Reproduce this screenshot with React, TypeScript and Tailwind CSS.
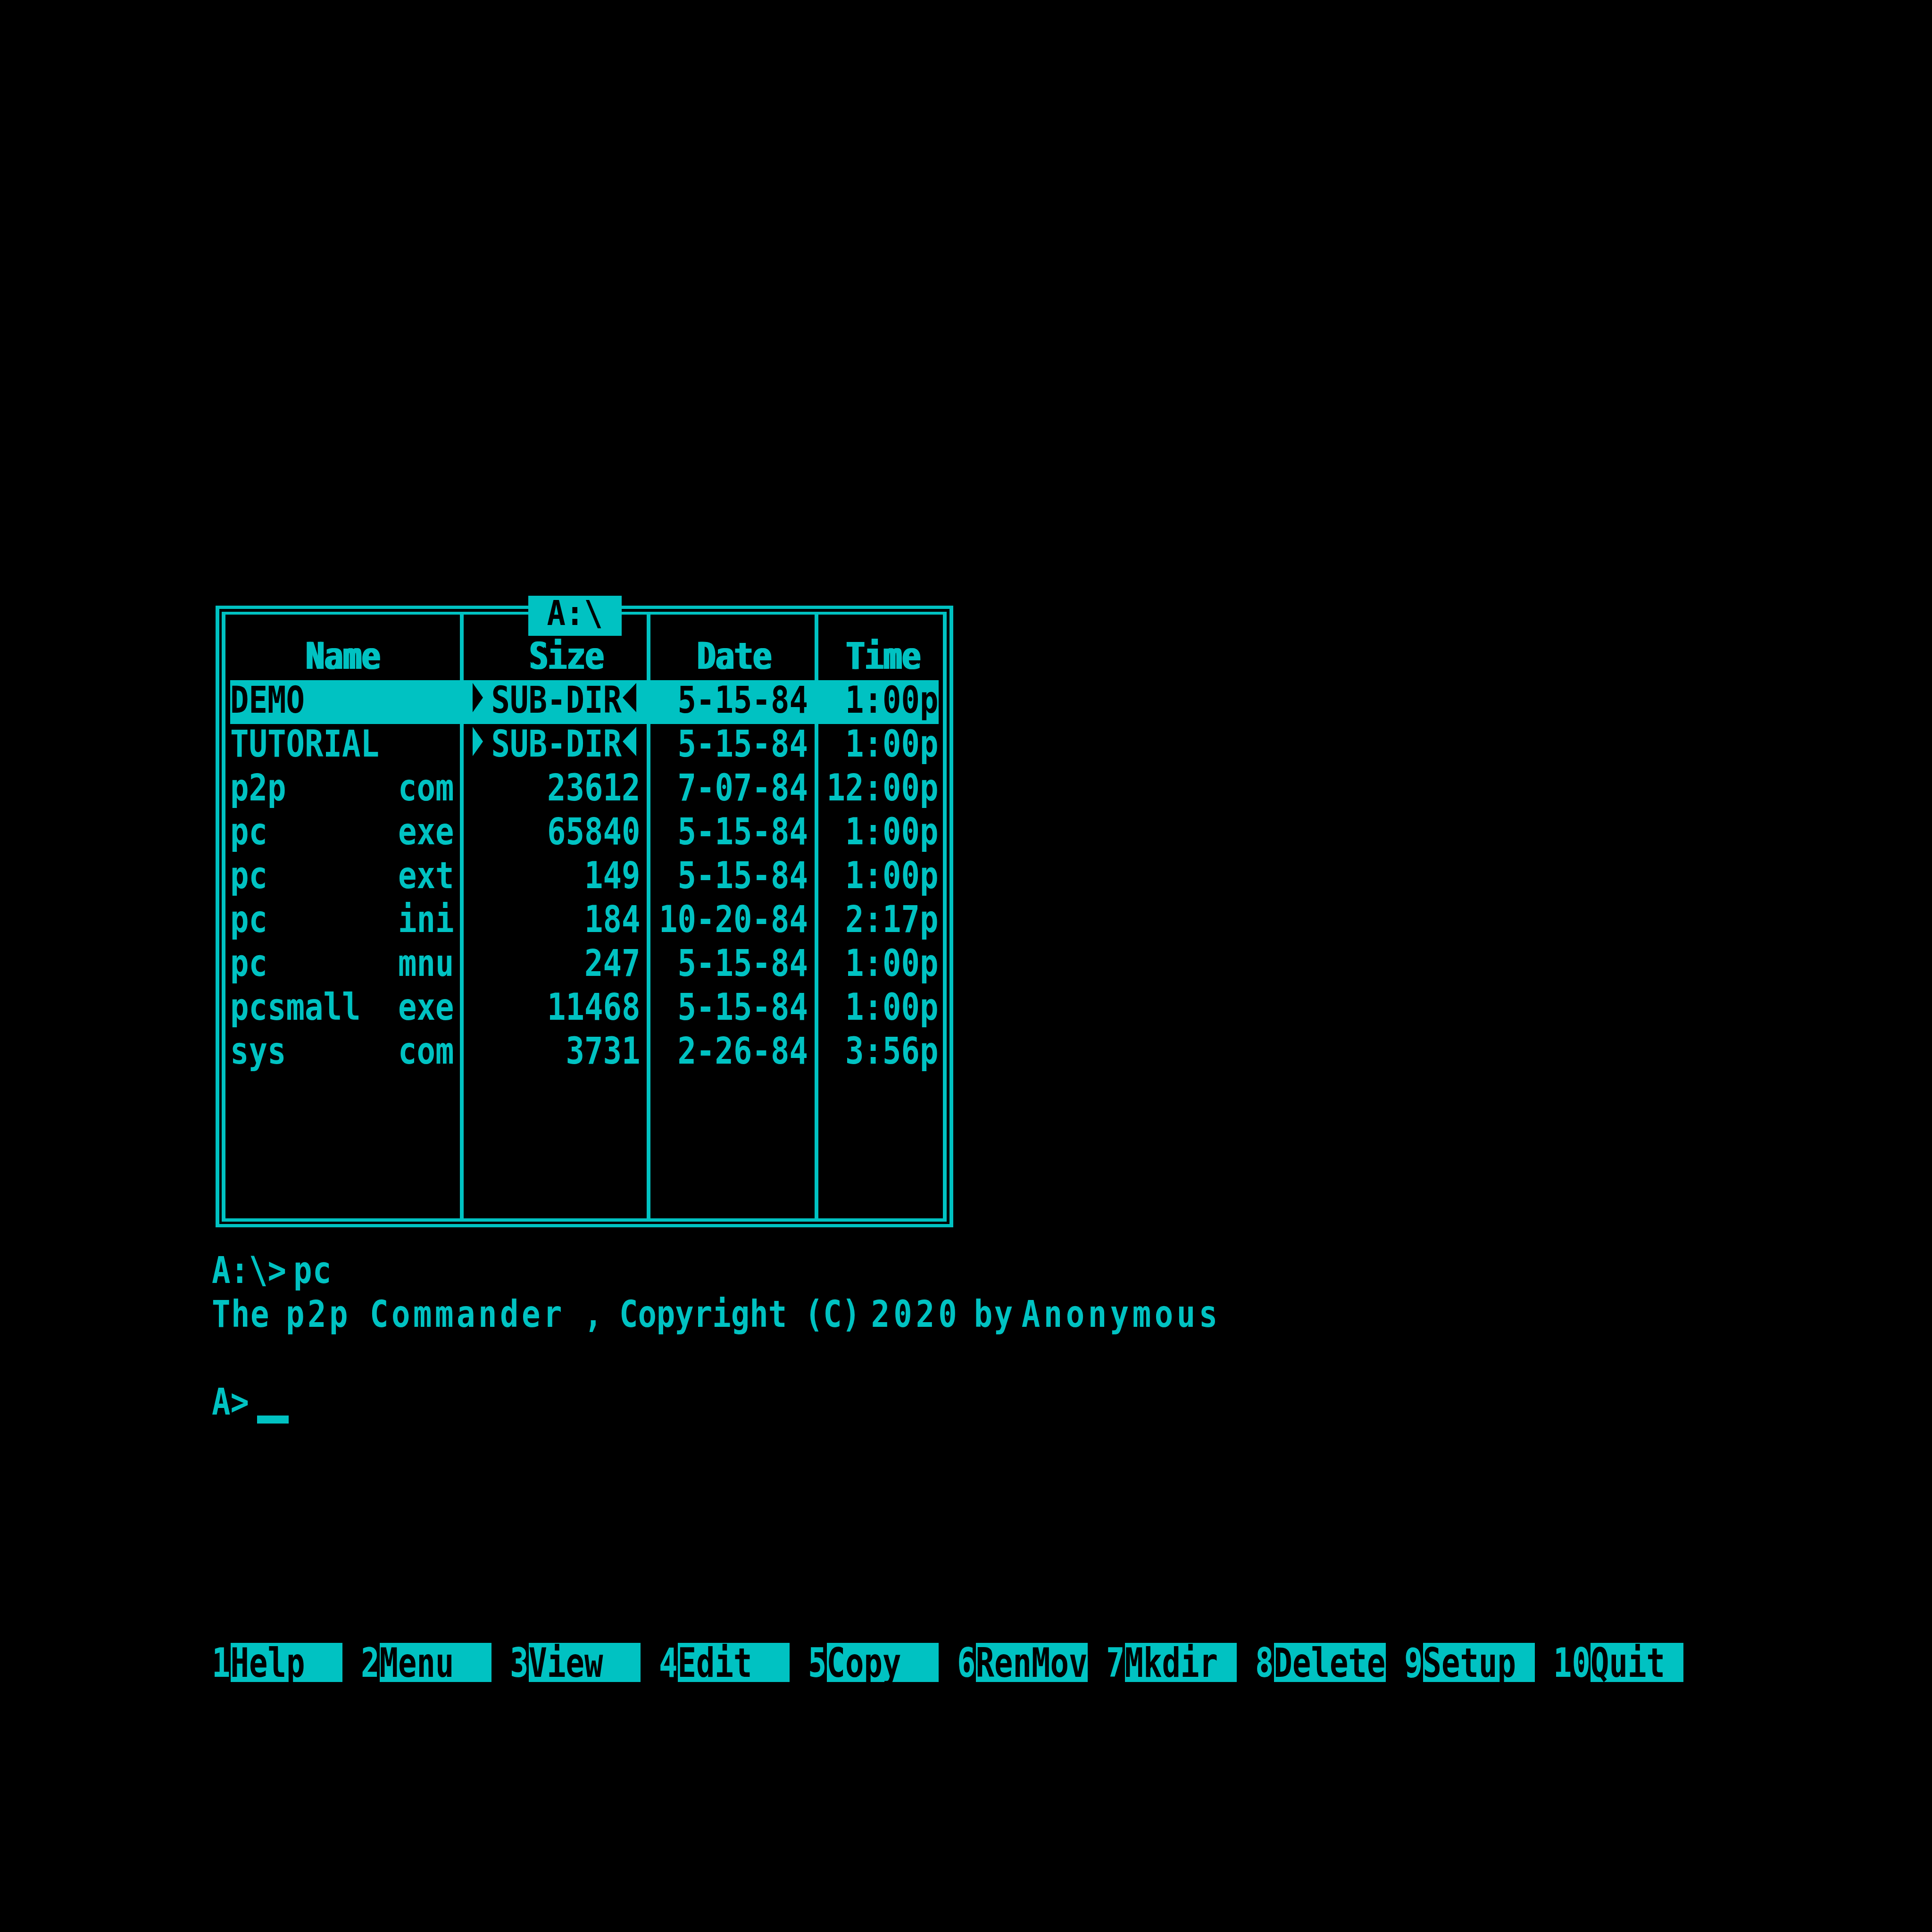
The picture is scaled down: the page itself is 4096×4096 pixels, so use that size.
import React from 'react';

type Entry = { name: string; ext: string; size: string; date: string; time: string };

const files: Entry[] = [
  { name: 'DEMO', ext: '', size: 'DIR', date: '5-15-84', time: '1:00p' },
  { name: 'TUTORIAL', ext: '', size: 'DIR', date: '5-15-84', time: '1:00p' },
  { name: 'p2p', ext: 'com', size: '23612', date: '7-07-84', time: '12:00p' },
  { name: 'pc', ext: 'exe', size: '65840', date: '5-15-84', time: '1:00p' },
  { name: 'pc', ext: 'ext', size: '149', date: '5-15-84', time: '1:00p' },
  { name: 'pc', ext: 'ini', size: '184', date: '10-20-84', time: '2:17p' },
  { name: 'pc', ext: 'mnu', size: '247', date: '5-15-84', time: '1:00p' },
  { name: 'pcsmall', ext: 'exe', size: '11468', date: '5-15-84', time: '1:00p' },
  { name: 'sys', ext: 'com', size: '3731', date: '2-26-84', time: '3:56p' },
];

const keys = ['Help', 'Menu', 'View', 'Edit', 'Copy', 'RenMov', 'Mkdir', 'Delete', 'Setup', 'Quit'];

const words = [
  { t: 'The', cls: 'tracking-[1.5px]' },
  { t: 'p2p', cls: 'ml-[34px] tracking-[6.5px]' },
  { t: 'Commander', cls: 'ml-[40px] tracking-[6.5px]' },
  { t: ',', cls: 'ml-[40px]' },
  { t: 'Copyright', cls: 'ml-[35.5px]' },
  { t: '(C)', cls: 'ml-[37.5px]' },
  { t: '2020', cls: 'ml-[22.5px] tracking-[8px]' },
  { t: 'by', cls: 'ml-[28px] tracking-[3.5px]' },
  { t: 'Anonymous', cls: 'ml-[15px] tracking-[7.5px]' },
];

// text-mode glyphs are tall and narrow, so the mono font gets stretched vertically
const Txt = ({ children, cls = 'origin-[50%_69px] scale-y-[1.19]' }: { children: React.ReactNode; cls?: string }) => (
  <span className={`inline-block whitespace-pre ${cls}`}>{children}</span>
);

const Arrow = ({ dir }: { dir: 'right' | 'left' }) => (
  <svg width="39.5" height="93" viewBox="0 0 39.5 93" className="shrink-0 fill-current">
    <polygon points={dir === 'right' ? '0,6 22,37 0,68' : '31,6 2,37 31,68'} />
  </svg>
);

const hl = 'bg-[#00c2c2] text-black';
const head = 'h-[93px] leading-[93px] [text-shadow:4px_0_0_currentColor]';

const Panel = () => (
  <div className="relative ml-[8px] w-[1564px] h-[1318px] border-x-8 border-y-[7px] border-[#00c2c2] pt-[6px] pb-[5px] pl-[5px] pr-[6px]">
    <div className="h-full flex border-x-8 border-t-[6px] border-b-[7px] border-[#00c2c2]">
      {/* Name */}
      <div className="w-[497px] pl-[10px]">
        <div className="h-[46px]" />
        <div className={`${head} pl-[158.5px]`}><Txt>Name</Txt></div>
        {files.map((f, i) => (
          <div key={i} className={`h-[93px] leading-[93px] flex justify-between pr-[12.5px] ${i === 0 ? hl : ''}`}>
            <Txt>{f.name}</Txt>
            <Txt>{f.ext}</Txt>
          </div>
        ))}
      </div>

      {/* Size */}
      <div className="w-[396px] border-l-8 border-[#00c2c2]">
        <div className="h-[46px]" />
        <div className={`${head} pl-[137.5px]`}><Txt>Size</Txt></div>
        {files.map((f, i) => (
          <div key={i} className={`h-[93px] leading-[93px] flex justify-end pr-[13.5px] ${i === 0 ? hl : ''}`}>
            {f.size === 'DIR' ? (
              <>
                <Arrow dir="right" />
                <Txt>SUB-DIR</Txt>
                <Arrow dir="left" />
              </>
            ) : (
              <Txt>{f.size}</Txt>
            )}
          </div>
        ))}
      </div>

      {/* Date */}
      <div className="w-[356px] border-l-8 border-[#00c2c2]">
        <div className="h-[46px]" />
        <div className={`${head} pl-[97px]`}><Txt>Date</Txt></div>
        {files.map((f, i) => (
          <div key={i} className={`h-[93px] leading-[93px] flex justify-end pr-[14px] ${i === 0 ? hl : ''}`}>
            <Txt>{f.date}</Txt>
          </div>
        ))}
      </div>

      {/* Time */}
      <div className="w-[272px] border-l-8 border-[#00c2c2] pr-[9px]">
        <div className="h-[46px]" />
        <div className={`${head} pl-[57px]`}><Txt>Time</Txt></div>
        {files.map((f, i) => (
          <div key={i} className={`h-[93px] leading-[93px] flex justify-end pr-[0.5px] ${i === 0 ? hl : ''}`}>
            <Txt>{f.time}</Txt>
          </div>
        ))}
      </div>
    </div>

    {/* path title sits over the top border */}
    <div className="absolute left-[655px] top-[-28px] w-[198px] h-[85px] bg-[#00c2c2] text-black pl-[39.5px] leading-[79px]">
      <Txt cls="origin-[50%_62px] scale-y-[1.11]">{'A:\\'}</Txt>
    </div>
  </div>
);

export default function App() {
  return (
    <div className="w-[4096px] h-[4096px] overflow-hidden bg-black pt-[1284px] pl-[449px] font-['DejaVu_Sans_Mono','Liberation_Mono',monospace] font-bold text-[65.6px] text-[#00c2c2]">
      <Panel />

      {/* command lines */}
      <div className="mt-[49px]">
        <div className="h-[93px] leading-[93px] flex">
          <Txt>{'A:\\>'}</Txt>
          <span className="ml-[15px] tracking-[1.5px]"><Txt>pc</Txt></span>
        </div>
        <div className="h-[93px] leading-[93px] flex">
          {words.map((w) => (
            <span key={w.t} className={w.cls}><Txt>{w.t}</Txt></span>
          ))}
        </div>
        <div className="h-[93px]" />
        <div className="h-[93px] leading-[93px] flex items-start">
          <Txt>{'A>'}</Txt>
          <span className="ml-[17px] mt-[71px] w-[67px] h-[17px] bg-[#00c2c2]" />
        </div>
      </div>

      {/* function key bar */}
      <div className="mt-[460px] flex h-[83px]">
        {keys.map((k, i) => (
          <div key={k} className={`flex ${i < 9 ? 'mr-[39.5px]' : ''}`}>
            <div className="leading-[99px]">
              <Txt cls="origin-[50%_72px] scale-y-[1.3]">{String(i + 1)}</Txt>
            </div>
            <div className={`h-[83px] leading-[99px] bg-[#00c2c2] text-black ${i < 9 ? 'w-[237px]' : 'w-[197.5px]'}`}>
              <Txt cls="origin-[50%_72px] scale-y-[1.3]">{k}</Txt>
            </div>
          </div>
        ))}
      </div>
    </div>
  );
}
